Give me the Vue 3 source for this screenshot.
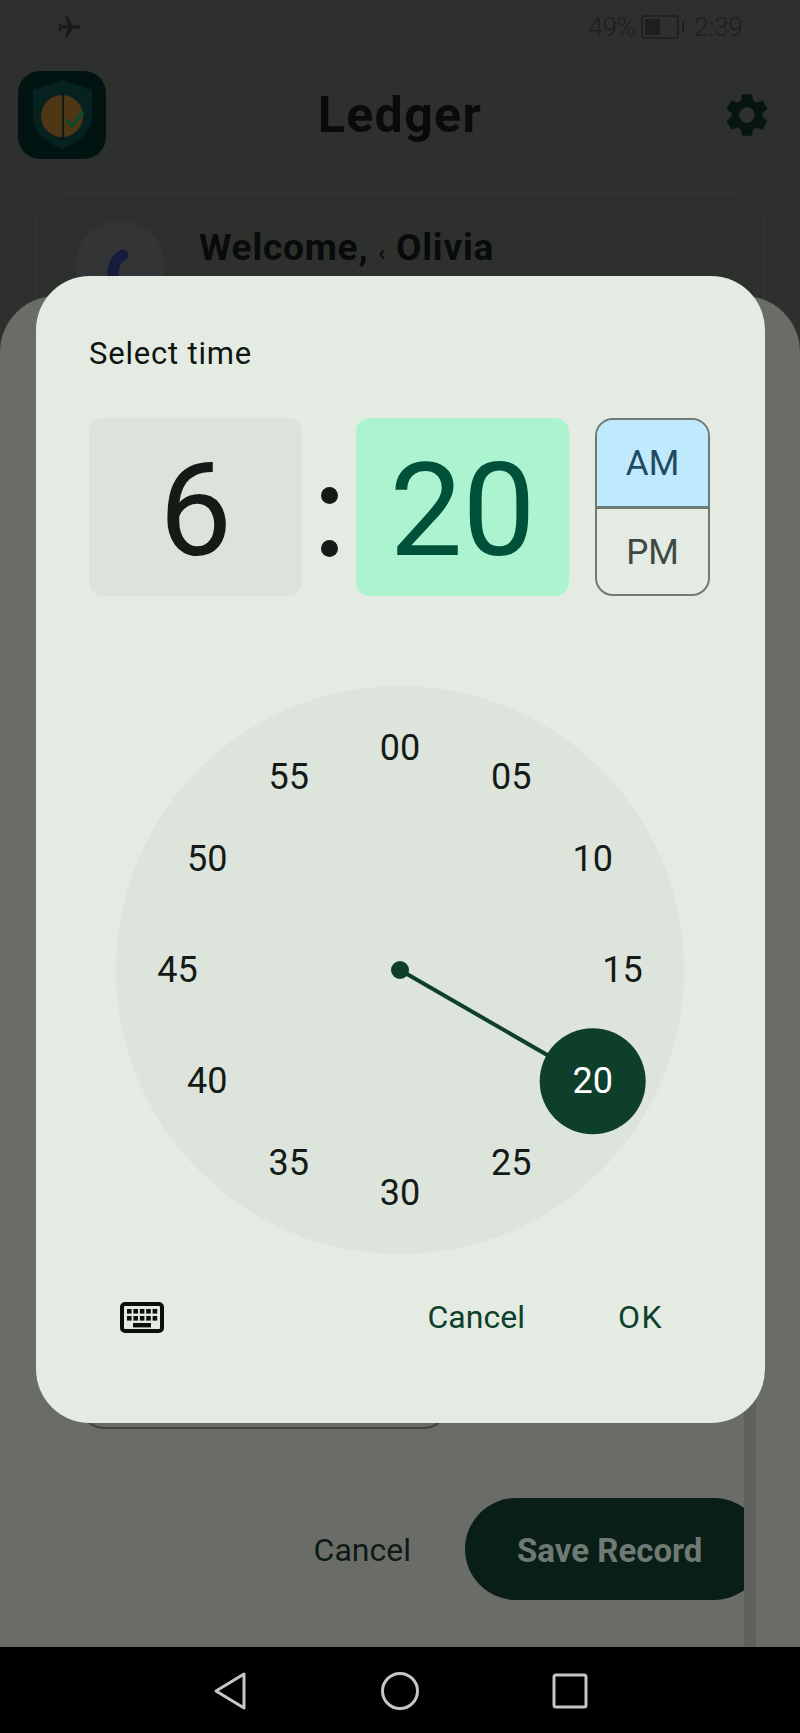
<template>
  <div class="screen">
    <div class="page">
      <div class="status">
        <svg class="plane" viewBox="0 0 24 24"><path transform="rotate(90 12 12)" d="M21 16v-2l-8-5V3.5c0-.83-.67-1.5-1.5-1.5S10 2.67 10 3.5V9l-8 5v2l8-2.5V19l-2 1.5V22l3.5-1 3.5 1v-1.5L13 19v-5.5l8 2.5z" /></svg>
        <div class="status-right">
          <span>49%</span>
          <svg class="battery" viewBox="0 0 44 24">
            <rect x="1" y="1" width="36" height="22" rx="3" fill="none" stroke="#1d1f1c" stroke-width="1.6" />
            <rect x="4" y="4" width="15" height="16" fill="#1d1f1c" />
            <rect x="41" y="7" width="2" height="10" fill="#1d1f1c" />
          </svg>
          <span>2:39</span>
        </div>
      </div>

      <div class="appbar">
        <svg class="logo" viewBox="0 0 88 88">
          <rect width="88" height="88" rx="22" fill="#021412" />
          <path d="M44 9 L15 19 V46 C15 62 30 72 44 78 C58 72 74 62 74 46 V19 Z" fill="#062120" />
          <circle cx="44" cy="45" r="21" fill="#4f3716" />
          <line x1="45" y1="22" x2="45" y2="69" stroke="#0a1412" stroke-width="1.6" />
          <path d="M48 49 L54 55 L65 41" fill="none" stroke="#174729" stroke-width="4" />
        </svg>
        <h1>Ledger</h1>
        <svg class="gear" viewBox="0 0 24 24"><path d="M19.14 12.94c.04-.3.06-.61.06-.94 0-.32-.02-.64-.07-.94l2.03-1.58a.49.49 0 0 0 .12-.61l-1.92-3.32a.488.488 0 0 0-.59-.22l-2.39.96c-.5-.38-1.03-.7-1.62-.94l-.36-2.54a.484.484 0 0 0-.48-.41h-3.84c-.24 0-.43.17-.47.41l-.36 2.54c-.59.24-1.13.57-1.62.94l-2.39-.96c-.22-.08-.47 0-.59.22L2.74 8.87c-.12.21-.08.47.12.61l2.03 1.58c-.05.3-.09.63-.09.94s.02.64.07.94l-2.03 1.58a.49.49 0 0 0-.12.61l1.92 3.32c.12.22.37.29.59.22l2.39-.96c.5.38 1.03.7 1.62.94l.36 2.54c.05.24.24.41.48.41h3.84c.24 0 .44-.17.47-.41l.36-2.54c.59-.24 1.13-.56 1.62-.94l2.39.96c.22.08.47 0 .59-.22l1.92-3.32c.12-.22.07-.47-.12-.61l-2.01-1.58zM12 15.6c-1.98 0-3.6-1.62-3.6-3.6s1.62-3.6 3.6-3.6 3.6 1.62 3.6 3.6-1.62 3.6-3.6 3.6z" /></svg>
      </div>

      <div class="card">
        <div class="avatar">
          <svg viewBox="0 0 90 90"><path d="M48 34 C38 38 36 52 40 68" fill="none" stroke="#161c3c" stroke-width="11" stroke-linecap="round" /></svg>
        </div>
        <div class="welcome">Welcome, <span class="tiny">‹</span> Olivia</div>
      </div>

      <!-- bottom sheet behind the dialog -->
      <div class="sheet">
        <div class="scrollbar"></div>
        <div class="field"></div>
        <div class="sheet-actions">
          <span class="sheet-cancel">Cancel</span>
          <div class="save"><span>Save Record</span></div>
        </div>
      </div>

      <div class="dialog">
        <div class="dialog-title">Select time</div>

        <div class="time-row">
          <div class="time-box hour">6</div>
          <div class="colon"><i></i><i></i></div>
          <div class="time-box minute">20</div>
          <div class="period">
            <div class="am">AM</div>
            <div class="pm">PM</div>
          </div>
        </div>

        <div class="dial">
          <svg class="hand" viewBox="0 0 568 568">
            <line x1="284" y1="284" :x2="selected.x" :y2="selected.y" stroke="#0d3f2b" stroke-width="4" />
            <circle cx="284" cy="284" r="9" fill="#0d3f2b" />
            <circle :cx="selected.x" :cy="selected.y" r="53" fill="#0d3f2b" />
          </svg>
          <span
            v-for="t in ticks"
            :key="t.label"
            class="tick"
            :class="{ on: t.label === '20' }"
            :style="{ left: t.x + 'px', top: t.y + 'px' }">{{ t.label }}</span>
        </div>

        <div class="dialog-actions">
          <svg class="keyboard" viewBox="0 0 44 31">
            <rect x="2" y="2" width="40" height="27" rx="3" fill="none" stroke="#0c100c" stroke-width="4" />
            <rect v-for="k in keys" :key="k.x + '-' + k.y" :x="k.x" :y="k.y" width="4.6" height="4.6" fill="#0c100c" />
            <rect x="13" y="21" width="18" height="4.4" fill="#0c100c" />
          </svg>
          <span class="btn cancel">Cancel</span>
          <span class="btn ok">OK</span>
        </div>
      </div>
    </div>

    <div class="nav">
      <svg viewBox="0 0 36 40" class="nav-back"><path d="M32 3 V37 L4 20 Z" fill="none" stroke="#c6c6c6" stroke-width="3" stroke-linejoin="round" /></svg>
      <svg viewBox="0 0 40 40" class="nav-home"><circle cx="20" cy="20" r="17.5" fill="none" stroke="#c6c6c6" stroke-width="3" /></svg>
      <svg viewBox="0 0 36 36" class="nav-recent"><rect x="2" y="2" width="32" height="32" rx="2" fill="none" stroke="#c6c6c6" stroke-width="3" /></svg>
    </div>
  </div>
</template>

<script setup>
const RADIUS = 222.5
const CENTER = 284

const ticks = ['00', '05', '10', '15', '20', '25', '30', '35', '40', '45', '50', '55'].map((label, i) => {
  const a = (i * 30 * Math.PI) / 180
  return {
    label,
    x: CENTER + RADIUS * Math.sin(a),
    y: CENTER - RADIUS * Math.cos(a)
  }
})

const selected = ticks[4]

const keys = []
for (let x = 7; x <= 33; x += 6.4) {
  keys.push({ x, y: 7 })
  keys.push({ x, y: 14 })
}
</script>

<style>
html, body {
  margin: 0;
  background: #000;
}
</style>

<style scoped>
.screen {
  width: 800px;
  height: 1733px;
  display: flex;
  flex-direction: column;
  font-family: Roboto, "Liberation Sans", sans-serif;
  overflow: hidden;
}
.page {
  position: relative;
  flex: 1;
  background: #2e302d;
  overflow: hidden;
}
.status {
  height: 54px;
  display: flex;
  justify-content: space-between;
  align-items: center;
  padding: 0 57px 0 56px;
  color: #1d1f1c;
  font-size: 26px;
  font-weight: 300;
}
.plane {
  width: 27px;
  height: 27px;
  fill: #1a1c1b;
}
.status-right {
  display: flex;
  align-items: center;
  gap: 5px;
}
.battery {
  width: 44px;
  height: 24px;
  margin-right: 4px;
}
.appbar {
  height: 104px;
  margin-top: 9px;
  padding: 0 27px 0 18px;
  display: grid;
  grid-template-columns: 1fr auto 1fr;
  align-items: center;
}
.logo {
  width: 88px;
  height: 88px;
}
h1 {
  margin: 0;
  padding-left: 9px;
  font-size: 50px;
  font-weight: 700;
  color: #080b09;
  letter-spacing: 1.4px;
}
.gear {
  width: 52px;
  height: 52px;
  fill: #06150d;
  justify-self: end;
}
.card {
  margin: 26px 36px 0;
  height: 400px;
  border: 1px solid #343633;
  border-radius: 28px;
  display: flex;
  gap: 34px;
  padding: 27px 0 0 38px;
}
.avatar {
  width: 90px;
  height: 90px;
  border-radius: 50%;
  background: #323436;
}
.welcome {
  font-size: 37px;
  font-weight: 700;
  letter-spacing: 0.8px;
  color: #080b09;
  margin-top: 5px;
}
.tiny {
  font-size: 22px;
}
.sheet {
  position: absolute;
  left: 0;
  right: 0;
  top: 296px;
  bottom: 0;
  background: #6a6d67;
  border-radius: 56px 56px 0 0;
}
.scrollbar {
  position: absolute;
  top: 500px;
  bottom: 0;
  left: 744px;
  width: 12px;
  background: #5e615c;
}
.field {
  position: absolute;
  left: 80px;
  top: 1001px;
  width: 368px;
  height: 132px;
  box-sizing: border-box;
  border: 2px solid #3f423e;
  border-radius: 24px;
}
.sheet-actions {
  position: absolute;
  top: 1202px;
  left: 0;
  width: 744px;
  height: 102px;
  overflow: hidden;
  display: flex;
  justify-content: flex-end;
  align-items: center;
  gap: 54px;
}
.sheet-cancel {
  font-size: 32px;
  padding-top: 2px;
  color: #0e1a15;
}
.save {
  width: 300px;
  height: 102px;
  margin-right: -21px;
  flex: none;
  box-sizing: border-box;
  padding: 2px 0 0 52px;
  border-radius: 51px;
  background: #0a1e18;
  color: #6f7a74;
  font-size: 33px;
  font-weight: 700;
  display: flex;
  align-items: center;
  white-space: nowrap;
}
.dialog {
  position: absolute;
  left: 36px;
  top: 276px;
  width: 729px;
  height: 1147px;
  box-sizing: border-box;
  padding: 59px 53px 0;
  background: #e3ebe3;
  border-radius: 54px;
  color: #10140f;
}
.dialog-title {
  font-size: 31px;
  line-height: 38px;
  letter-spacing: 0.8px;
}
.time-row {
  margin-top: 45px;
  display: flex;
  align-items: stretch;
  height: 178px;
}
.time-box {
  width: 213px;
  border-radius: 14px;
  display: flex;
  align-items: center;
  justify-content: center;
  padding-top: 6px;
  box-sizing: border-box;
  font-size: 130px;
  font-weight: 400;
}
.hour {
  background: #dce3db;
  color: #141a15;
}
.minute {
  background: #abf4cf;
  color: #00513a;
}
.colon {
  width: 54px;
  display: flex;
  flex-direction: column;
  align-items: center;
  justify-content: flex-start;
  gap: 36px;
  padding-top: 69px;
}
.colon i {
  width: 17px;
  height: 17px;
  border-radius: 50%;
  background: #141a15;
}
.period {
  width: 115px;
  margin-left: 26px;
  box-sizing: border-box;
  border: 2px solid #6f7a74;
  border-radius: 18px;
  overflow: hidden;
  display: flex;
  flex-direction: column;
  font-size: 35px;
}
.am,
.pm {
  flex: 1;
  display: flex;
  align-items: center;
  justify-content: center;
  padding-top: 2px;
}
.am {
  background: #bfe9fc;
  color: #1f4a61;
  border-bottom: 3px solid #6f7a74;
}
.pm {
  color: #3f4944;
}
.dial {
  position: relative;
  width: 568px;
  height: 568px;
  margin: 90px 0 0 27px;
  border-radius: 50%;
  background: #dce4dc;
}
.hand {
  position: absolute;
  inset: 0;
}
.tick {
  position: absolute;
  transform: translate(-50%, -50%);
  font-size: 36px;
  line-height: 40px;
  color: #141a15;
}
.tick.on {
  color: #fff;
}
.dialog-actions {
  margin-top: 47px;
  display: flex;
  align-items: center;
  height: 32px;
  font-size: 32px;
  color: #0d3f2b;
}
.keyboard {
  width: 44px;
  height: 31px;
  margin-left: 31px;
}
.btn.cancel {
  margin-left: auto;
}
.btn.ok {
  margin-left: 93px;
  margin-right: 49px;
  letter-spacing: 1.5px;
}
.nav {
  height: 86px;
  background: #000;
  position: relative;
}
.nav svg {
  position: absolute;
}
.nav-back {
  left: 212px;
  top: 24px;
  width: 36px;
  height: 40px;
}
.nav-home {
  left: 380px;
  top: 24px;
  width: 40px;
  height: 40px;
}
.nav-recent {
  left: 552px;
  top: 26px;
  width: 36px;
  height: 36px;
}
</style>
